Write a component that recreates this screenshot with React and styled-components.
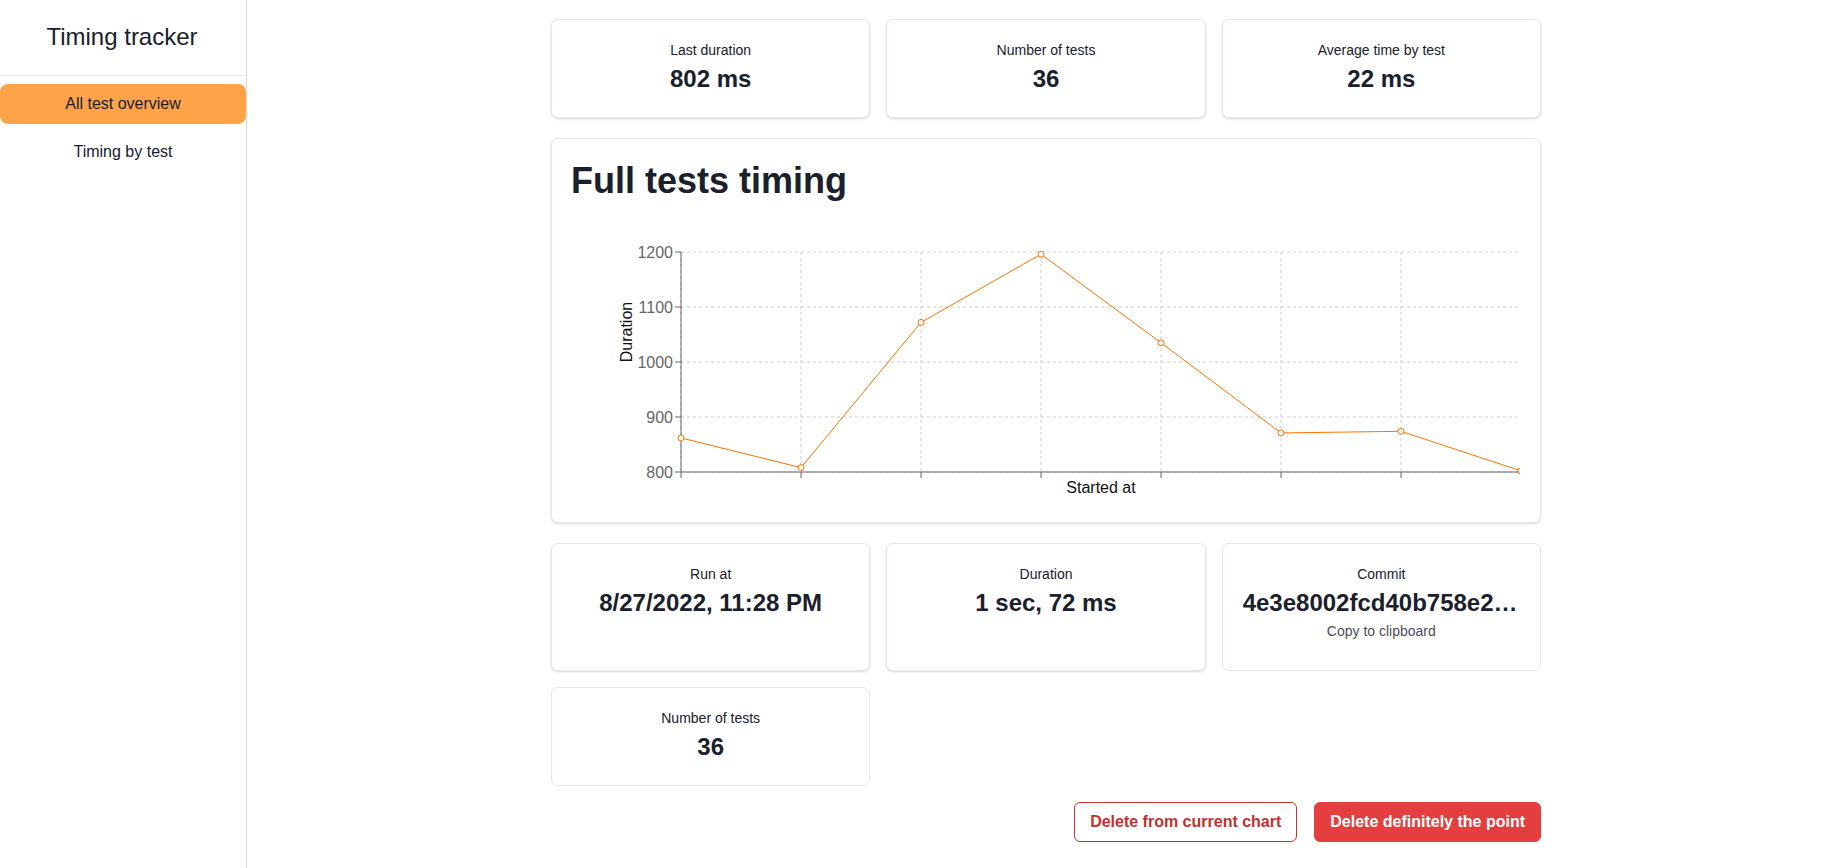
import React from "react";
import styled, { createGlobalStyle } from "styled-components";

const GlobalStyle = createGlobalStyle`
  html, body {
    margin: 0;
    padding: 0;
    background: #ffffff;
    font-family: "Liberation Sans", Arial, sans-serif;
    color: #1a202c;
  }
  * {
    box-sizing: border-box;
  }
`;

const Layout = styled.div`
  display: flex;
  min-height: 868px;
`;

const Sidebar = styled.aside`
  width: 247px;
  flex-shrink: 0;
  border-right: 1px solid #d9d9d9;
  display: flex;
  flex-direction: column;
`;

const Brand = styled.div`
  padding: 19px 2px 20px 0;
  font-size: 24px;
  line-height: 36px;
  text-align: center;
  border-bottom: 1px solid #e2e8f0;
`;

const Nav = styled.nav`
  display: flex;
  flex-direction: column;
  gap: 8px;
  padding-top: 8px;
`;

const NavItem = styled.a`
  display: flex;
  align-items: center;
  justify-content: center;
  height: 40px;
  border-radius: 8px;
  font-size: 16px;
  color: #1a202c;
  text-decoration: none;
  background: ${(p) => (p.$active ? "#ffa348" : "transparent")};
  cursor: pointer;
`;

const Main = styled.main`
  flex: 1;
  padding: 19px 0 20px 5px;
`;

const Content = styled.div`
  max-width: 990px;
  margin: 0 auto;
  display: flex;
  flex-direction: column;
  gap: 20px;
`;

const Grid = styled.div`
  display: grid;
  grid-template-columns: repeat(3, 1fr);
  gap: 16px;
`;

const Card = styled.div`
  background: #fff;
  border: 1px solid #e2e8f0;
  border-radius: 7px;
  box-shadow: ${(p) =>
    p.$flat
      ? "none"
      : "0 1px 3px 0 rgba(0, 0, 0, 0.1), 0 1px 2px 0 rgba(0, 0, 0, 0.06)"};
  padding: 20px;
  min-width: 0;
`;

const Stat = styled(Card)`
  text-align: center;
`;

const StatLabel = styled.div`
  font-size: 14px;
  line-height: 21px;
`;

const StatNumber = styled.div`
  font-size: 24px;
  line-height: 36px;
  font-weight: 700;
  white-space: nowrap;
  overflow: hidden;
  text-overflow: ellipsis;
`;

const StatHelp = styled.div`
  font-size: 14px;
  line-height: 21px;
  opacity: 0.8;
  margin-bottom: 8px;
  cursor: pointer;
`;

const ChartTitle = styled.h2`
  margin: 0 0 0 -1px;
  font-size: 36px;
  line-height: 1.2;
  font-weight: 700;
`;

const ChartBox = styled.div`
  width: 100%;
  height: 300px;
  overflow: hidden;

  svg {
    display: block;
    overflow: hidden;
    font-family: "Liberation Sans", Arial, sans-serif;
  }
`;

const Lower = styled.div`
  display: flex;
  flex-direction: column;
  gap: 16px;
`;

const Actions = styled.div`
  display: flex;
  justify-content: flex-end;
  gap: 17px;
`;

const Button = styled.button`
  height: 40px;
  padding: 0 15px;
  border-radius: 6px;
  font-family: inherit;
  font-size: 16px;
  font-weight: 700;
  cursor: pointer;
  border: 1px solid ${(p) => (p.$solid ? "#e53e3e" : "#c53030")};
  background: ${(p) => (p.$solid ? "#e53e3e" : "#ffffff")};
  color: ${(p) => (p.$solid ? "#ffffff" : "#c53030")};
`;

const durations = [862, 808, 1072, 1196, 1035, 871, 874, 802];
const yTicks = [800, 900, 1000, 1100, 1200];

const X0 = 109;
const STEP = 120;
const X1 = X0 + STEP * 7;
const Y_TOP = 50;
const Y_BOTTOM = 270;
const yOf = (v) => Y_BOTTOM - (v - 800) * 0.55;

function TimingChart() {
  const points = durations.map((d, i) => [X0 + i * STEP, yOf(d)]);
  return (
    <ChartBox>
      <svg width="948" height="300" viewBox="0 0 948 300">
        <g stroke="#ccc" strokeDasharray="3 3" fill="none">
          {yTicks.map((t) => (
            <line key={t} x1={X0} x2={X1} y1={yOf(t)} y2={yOf(t)} />
          ))}
          {points.map(([x]) => (
            <line key={x} x1={x} x2={x} y1={Y_TOP} y2={Y_BOTTOM} />
          ))}
        </g>

        <g stroke="#666" fill="none">
          <line x1={X0} x2={X0} y1={Y_TOP} y2={Y_BOTTOM} />
          <line x1={X0} x2={X1} y1={Y_BOTTOM} y2={Y_BOTTOM} />
          {yTicks.map((t) => (
            <line key={t} x1={X0 - 6} x2={X0} y1={yOf(t)} y2={yOf(t)} />
          ))}
          {points.map(([x]) => (
            <line key={x} x1={x} x2={x} y1={Y_BOTTOM} y2={Y_BOTTOM + 6} />
          ))}
        </g>

        <g fill="#666" fontSize="16" textAnchor="end">
          {yTicks.map((t) => (
            <text key={t} x={X0 - 8} y={yOf(t)} dy="0.355em">
              {t}
            </text>
          ))}
        </g>

        <text
          x="54"
          y="130"
          fontSize="16"
          fill="#111"
          textAnchor="middle"
          dy="0.355em"
          transform="rotate(-90 54 130)"
        >
          Duration
        </text>
        <text x="529" y="285" fontSize="16" fill="#111" textAnchor="middle" dy="0.355em">
          Started at
        </text>

        <polyline
          points={points.map((p) => p.join(",")).join(" ")}
          fill="none"
          stroke="#ff7300"
          strokeWidth="1"
        />
        {points.map(([x, y]) => (
          <circle key={x} cx={x} cy={y} r="3" fill="#fff" stroke="#ff7300" strokeWidth="1" />
        ))}
      </svg>
    </ChartBox>
  );
}

export default function App() {
  return (
    <>
      <GlobalStyle />
      <Layout>
        <Sidebar>
          <Brand>Timing tracker</Brand>
          <Nav>
            <NavItem $active>All test overview</NavItem>
            <NavItem>Timing by test</NavItem>
          </Nav>
        </Sidebar>

        <Main>
          <Content>
            <Grid>
              <Stat>
                <StatLabel>Last duration</StatLabel>
                <StatNumber>802 ms</StatNumber>
              </Stat>
              <Stat>
                <StatLabel>Number of tests</StatLabel>
                <StatNumber>36</StatNumber>
              </Stat>
              <Stat>
                <StatLabel>Average time by test</StatLabel>
                <StatNumber>22 ms</StatNumber>
              </Stat>
            </Grid>

            <Card>
              <ChartTitle>Full tests timing</ChartTitle>
              <TimingChart />
            </Card>

            <Lower>
              <Grid>
                <Stat>
                  <StatLabel>Run at</StatLabel>
                  <StatNumber>8/27/2022, 11:28 PM</StatNumber>
                </Stat>
                <Stat>
                  <StatLabel>Duration</StatLabel>
                  <StatNumber>1 sec, 72 ms</StatNumber>
                </Stat>
                <Stat $flat>
                  <StatLabel>Commit</StatLabel>
                  <StatNumber>4e3e8002fcd40b758e2a91c6d35f0b7e4a2c19d8</StatNumber>
                  <StatHelp>Copy to clipboard</StatHelp>
                </Stat>
                <Stat $flat>
                  <StatLabel>Number of tests</StatLabel>
                  <StatNumber>36</StatNumber>
                </Stat>
              </Grid>

              <Actions>
                <Button>Delete from current chart</Button>
                <Button $solid>Delete definitely the point</Button>
              </Actions>
            </Lower>
          </Content>
        </Main>
      </Layout>
    </>
  );
}
